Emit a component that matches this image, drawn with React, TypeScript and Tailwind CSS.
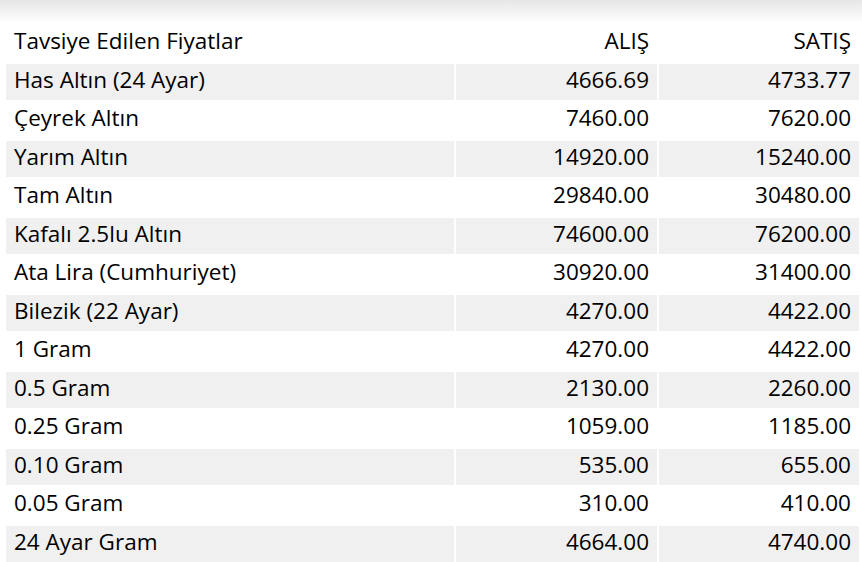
import React from 'react';

const rows = [
    { name: 'Has Altın (24 Ayar)', buy: '4666.69', sell: '4733.77' },
    { name: 'Çeyrek Altın', buy: '7460.00', sell: '7620.00' },
    { name: 'Yarım Altın', buy: '14920.00', sell: '15240.00' },
    { name: 'Tam Altın', buy: '29840.00', sell: '30480.00' },
    { name: 'Kafalı 2.5lu Altın', buy: '74600.00', sell: '76200.00' },
    { name: 'Ata Lira (Cumhuriyet)', buy: '30920.00', sell: '31400.00' },
    { name: 'Bilezik (22 Ayar)', buy: '4270.00', sell: '4422.00' },
    { name: '1 Gram', buy: '4270.00', sell: '4422.00' },
    { name: '0.5 Gram', buy: '2130.00', sell: '2260.00' },
    { name: '0.25 Gram', buy: '1059.00', sell: '1185.00' },
    { name: '0.10 Gram', buy: '535.00', sell: '655.00' },
    { name: '0.05 Gram', buy: '310.00', sell: '410.00' },
    { name: '24 Ayar Gram', buy: '4664.00', sell: '4740.00' },
];

export default function App() {
    return (
        <div className="w-[862px] h-[562px] overflow-hidden bg-white text-black font-['Open_Sans',sans-serif]">
            {/* shadow from the bar above */}
            <div className="h-[23px] bg-gradient-to-b from-[#e6e6e6] to-white" />

            <table className="ml-[4px] w-[857px] table-fixed border-separate border-spacing-[2px] text-[22.5px] leading-[31px]">
                <thead>
                    <tr>
                        <th className="w-[448px] px-2 pt-0 pb-[5.5px] text-left font-normal">Tavsiye Edilen Fiyatlar</th>
                        <th className="w-[201px] px-2 pt-0 pb-[5.5px] text-right font-normal">ALIŞ</th>
                        <th className="px-2 pt-0 pb-[5.5px] text-right font-normal">SATIŞ</th>
                    </tr>
                </thead>
                <tbody>
                    {rows.map((row, index) => (
                        <tr key={row.name} className={index % 2 === 0 ? 'bg-[#f0f0f0]' : 'bg-white'}>
                            <td className="px-2 pt-0 pb-[5.5px] text-left">{row.name}</td>
                            <td className="px-2 pt-0 pb-[5.5px] text-right">{row.buy}</td>
                            <td className="px-2 pt-0 pb-[5.5px] text-right">{row.sell}</td>
                        </tr>
                    ))}
                </tbody>
            </table>
        </div>
    );
}
